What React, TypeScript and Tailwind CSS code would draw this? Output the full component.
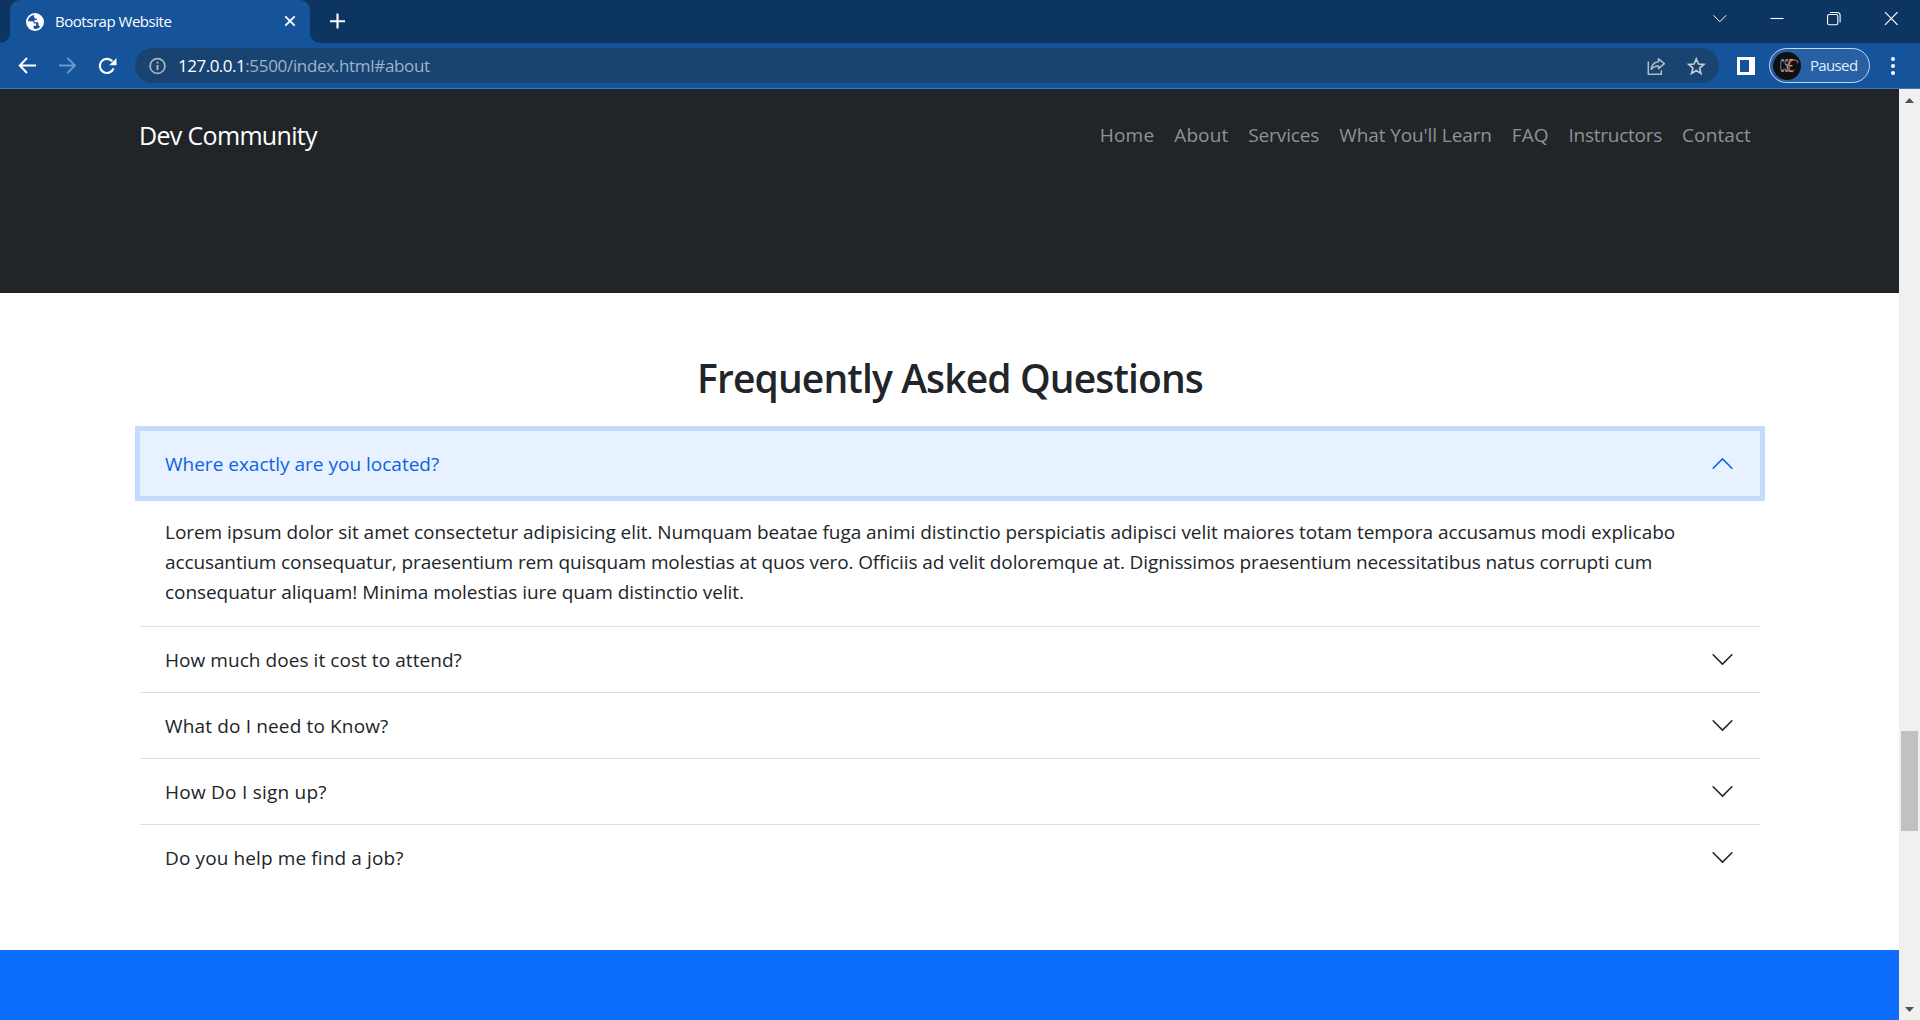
import type { ReactNode } from "react";

const navLinks = [
  { label: "Home", tracking: "tracking-[0.2px]" },
  { label: "About", tracking: "tracking-[0.1px]" },
  { label: "Services", tracking: "tracking-[-0.12px]" },
  { label: "What You'll Learn", tracking: "tracking-[-0.11px]" },
  { label: "FAQ", tracking: "tracking-normal" },
  { label: "Instructors", tracking: "tracking-[-0.25px]" },
  { label: "Contact", tracking: "tracking-[0.1px]" },
];

const questions = [
  { label: "How much does it cost to attend?", tracking: "tracking-[0.06px]" },
  { label: "What do I need to Know?", tracking: "tracking-[0.15px]" },
  { label: "How Do I sign up?", tracking: "tracking-[0.24px]" },
  { label: "Do you help me find a job?", tracking: "tracking-[0.12px]" },
];

function Chevron({ className }: { className: string }) {
  return (
    <svg viewBox="0 0 16 16" fill="currentColor" className={className}>
      <path
        fillRule="evenodd"
        d="M1.646 4.646a.5.5 0 0 1 .708 0L8 10.293l5.646-5.647a.5.5 0 0 1 .708.708l-6 6a.5.5 0 0 1-.708 0l-6-6a.5.5 0 0 1 0-.708z"
      />
    </svg>
  );
}

function Stroke({ className, width, children }: { className: string; width: number; children: ReactNode }) {
  return (
    <svg viewBox="0 0 20 20" fill="none" stroke="currentColor" strokeWidth={width} className={className}>
      {children}
    </svg>
  );
}

function TabStrip() {
  return (
    <div className="flex h-[43px] bg-[#0c3561] text-white">
      <svg viewBox="0 0 10 10" className="size-[10px] self-end fill-[#15539a]">
        <path d="M10 0v10H0A10 10 0 0 0 10 0z" />
      </svg>
      <div className="flex w-[300px] items-center rounded-t-[10px] bg-[#15539a] pr-[10px] pl-[16px]">
        <svg viewBox="0 0 18 18" className="size-[18px] shrink-0">
          <circle cx="9" cy="9" r="9" fill="#fff" />
          <path
            fill="#15539a"
            d="M8.2 2C5 2.300 2.300 4.800 2 8.200l4.300.1c1.400 0 1.500 1 1.500 2.100h2.300v2.300H7.600v2.900c2.600.8 5.300-.2 6.900-2.200-1.200.1-2-.4-2-1.700V10.500c0-1-.6-1.300-1.700-1.300H8.500V7h1.300c.9 0 1.200-.5 1.200-1.300h-.9C8.600 5.700 7.700 4.300 8.200 2z"
          />
        </svg>
        <span className="ml-[11px] flex-1 pb-[2px] text-[15px] leading-5 tracking-[-0.47px] whitespace-nowrap">
          Bootsrap Website
        </span>
        <Stroke width={1.9} className="mb-px size-[20px] shrink-0">
          <path d="M5.300 5.300l9.400 9.400M14.700 5.300l-9.400 9.400" />
        </Stroke>
      </div>
      <svg viewBox="0 0 10 10" className="size-[10px] self-end fill-[#15539a]">
        <path d="M0 0v10h10A10 10 0 0 1 0 0z" />
      </svg>
      <Stroke width={2.1} className="mt-[11px] ml-[7px] size-[20px]">
        <path d="M10.500 2.500v15M3 10.200h15" />
      </Stroke>
      <div className="mt-[8px] ml-auto flex gap-[37px] pr-[19px]">
        <Stroke width={1} className="size-[20px]">
          <path d="M3.500 7.300l6.300 6.500 6.300-6.500" />
        </Stroke>
        <Stroke width={1.1} className="size-[20px]">
          <path d="M3.500 10.500h13" />
        </Stroke>
        <Stroke width={1.1} className="size-[20px]">
          <rect x="3.600" y="6.500" width="10.200" height="10.200" rx="1.500" />
          <path d="M6 4.500h7.500a2.600 2.600 0 0 1 2.600 2.600v7.300" />
        </Stroke>
        <Stroke width={1.2} className="size-[20px]">
          <path d="M4 4.200l12.600 12.600M16.600 4.200L4 16.800" />
        </Stroke>
      </div>
    </div>
  );
}

function Avatar() {
  return (
    <span className="relative size-[28px] shrink-0 overflow-hidden rounded-full bg-[#0f1012]">
      <span className="absolute top-[5px] left-[7px] origin-left scale-x-[0.35] font-['Liberation_Sans'] text-[18px] leading-none text-[#b0b0b0]">
        CSE
      </span>
      <span className="absolute top-[3px] left-[12px] origin-center scale-x-[0.75] rotate-[20deg] font-['Liberation_Serif'] text-[20px] leading-none text-[#d9726c] italic">
        C
      </span>
    </span>
  );
}

function Toolbar() {
  return (
    <div className="flex h-[46px] items-center border-b border-[#3d75b7] bg-[#15539a] text-white">
      <div className="flex gap-[20px] pl-[17px]">
        <Stroke width={2} className="size-[20px]">
          <path d="M19 9.500H3M10 2L2.800 9.500l7.200 7.500" />
        </Stroke>
        <Stroke width={1.8} className="size-[20px] text-[#6e9aca]">
          <path d="M2 9.500h16M10.500 2L18 9.500 10.500 17" />
        </Stroke>
        <Stroke width={2.2} className="size-[20px]">
          <path d="M16.600 12.400A7.100 7.100 0 1 1 15.300 5.200" />
          <path d="M19.500 2v7.300h-7.300z" fill="currentColor" stroke="none" />
        </Stroke>
      </div>
      <div className="ml-[18px] flex h-[35px] w-[1584px] items-center rounded-full bg-[#194472] pr-[13px] pl-[13px]">
        <Stroke width={1.7} className="size-[20px] text-[#b0b5bc]">
          <circle cx="9.500" cy="10" r="7.400" />
          <path d="M9.500 9v5M9.500 5.700v1.900" strokeWidth="1.900" />
        </Stroke>
        <span className="ml-[10px] text-[17px] leading-6 tracking-[-0.5px]">127.0.0.1</span>
        <span className="text-[17px] leading-6 tracking-[-0.32px] text-[#9db3ca]">:5500/index.html#about</span>
        <Stroke width={1.500} className="ml-auto size-[20px] text-[#b3bac3]">
          <path d="M2.300 5.500v12.700h13v-4" />
          <path d="M12.500 2.800l5.900 4.900-5.900 4.900V9.900c-3.400 0-5.500 1-7.300 3.300.6-4 3-7 7.300-7.400z" strokeLinejoin="round" />
        </Stroke>
        <Stroke width={1.700} className="ml-[20px] size-[20px] text-[#c5cad0]">
          <path d="M10.300 3l2.100 5 5.400.5-4.100 3.600 1.200 5.300-4.600-2.800-4.700 2.800 1.300-5.300-4.100-3.600L8.100 8z" />
        </Stroke>
      </div>
      <div className="ml-[18px] flex h-[18px] w-[18px] border-[3px] border-r-[6px] border-white" />
      <div className="ml-[14px] flex h-[35px] w-[101px] items-center rounded-full border border-[#c3d8f2] bg-[#2860a5] pl-[3px]">
        <Avatar />
        <span className="ml-[9px] pb-[2px] text-[15px] leading-5 tracking-[-0.65px] text-[#e3ecf7]">Paused</span>
      </div>
      <div className="ml-[20.500px] flex flex-col gap-[3px]">
        <i className="size-[4px] rounded-full bg-white" />
        <i className="size-[4px] rounded-full bg-white" />
        <i className="size-[4px] rounded-full bg-white" />
      </div>
    </div>
  );
}

function Scrollbar() {
  return (
    <div className="flex w-[21px] flex-col items-center bg-[#f0f0f0]">
      <svg viewBox="0 0 9 5" className="mt-[9px] h-[5px] w-[9px] fill-[#505050]">
        <path d="M4.500 0L9 5H0z" />
      </svg>
      <div className="mt-[628px] h-[100px] w-[17px] bg-[#c1c1c1]" />
      <svg viewBox="0 0 9 5" className="mt-auto mb-[8px] h-[5px] w-[9px] fill-[#505050]">
        <path d="M0 0h9L4.500 5z" />
      </svg>
    </div>
  );
}

function Page() {
  return (
    <main className="flex w-[1899px] flex-col bg-white text-[19px] leading-[30px] text-[#212529]">
      <nav className="flex h-[204px] items-start justify-between bg-[#212529] pt-[31px] pr-[138px] pl-[139px]">
        <a className="text-[25px] leading-[30px] tracking-[-0.67px] text-white">Dev Community</a>
        <ul className="flex">
          {navLinks.map((link) => (
            <li key={link.label} className="px-[10px] text-[#909294]">
              <span className={link.tracking}>{link.label}</span>
            </li>
          ))}
        </ul>
      </nav>
      <section className="pt-[61px] pr-[139px] pb-[60px] pl-[140px]">
        <h2 className="text-center text-[39px] leading-[48px] font-semibold tracking-[-0.87px]">
          Frequently Asked Questions
        </h2>
        <div className="mt-[29px] flex flex-col">
          <button className="flex h-[65px] items-center justify-between bg-[#e7f1ff] px-[25px] text-[#0c63e4] ring-[5px] ring-[#c2dbfe]">
            <span>Where exactly are you located?</span>
            <Chevron className="size-[25px] rotate-180" />
          </button>
          <div className="px-[25px] pt-[21px] pb-[19px] whitespace-nowrap">
            <p className="tracking-[-0.04px]">
              Lorem ipsum dolor sit amet consectetur adipisicing elit. Numquam beatae fuga animi distinctio perspiciatis
              adipisci velit maiores totam tempora accusamus modi explicabo
            </p>
            <p className="tracking-[-0.11px]">
              accusantium consequatur, praesentium rem quisquam molestias at quos vero. Officiis ad velit doloremque at.
              Dignissimos praesentium necessitatibus natus corrupti cum
            </p>
            <p className="tracking-[-0.06px]">consequatur aliquam! Minima molestias iure quam distinctio velit.</p>
          </div>
          {questions.map((q) => (
            <button key={q.label} className="flex h-[66px] items-center justify-between border-t border-[#dfdfdf] px-[25px]">
              <span className={q.tracking}>{q.label}</span>
              <Chevron className="size-[25px]" />
            </button>
          ))}
        </div>
      </section>
      <section className="flex-1 bg-[#0d6efd]" />
    </main>
  );
}

export default function App() {
  return (
    <div className="flex h-[1020px] w-[1920px] flex-col overflow-hidden font-['Open_Sans',sans-serif]">
      <TabStrip />
      <Toolbar />
      <div className="flex flex-1">
        <Page />
        <Scrollbar />
      </div>
    </div>
  );
}
